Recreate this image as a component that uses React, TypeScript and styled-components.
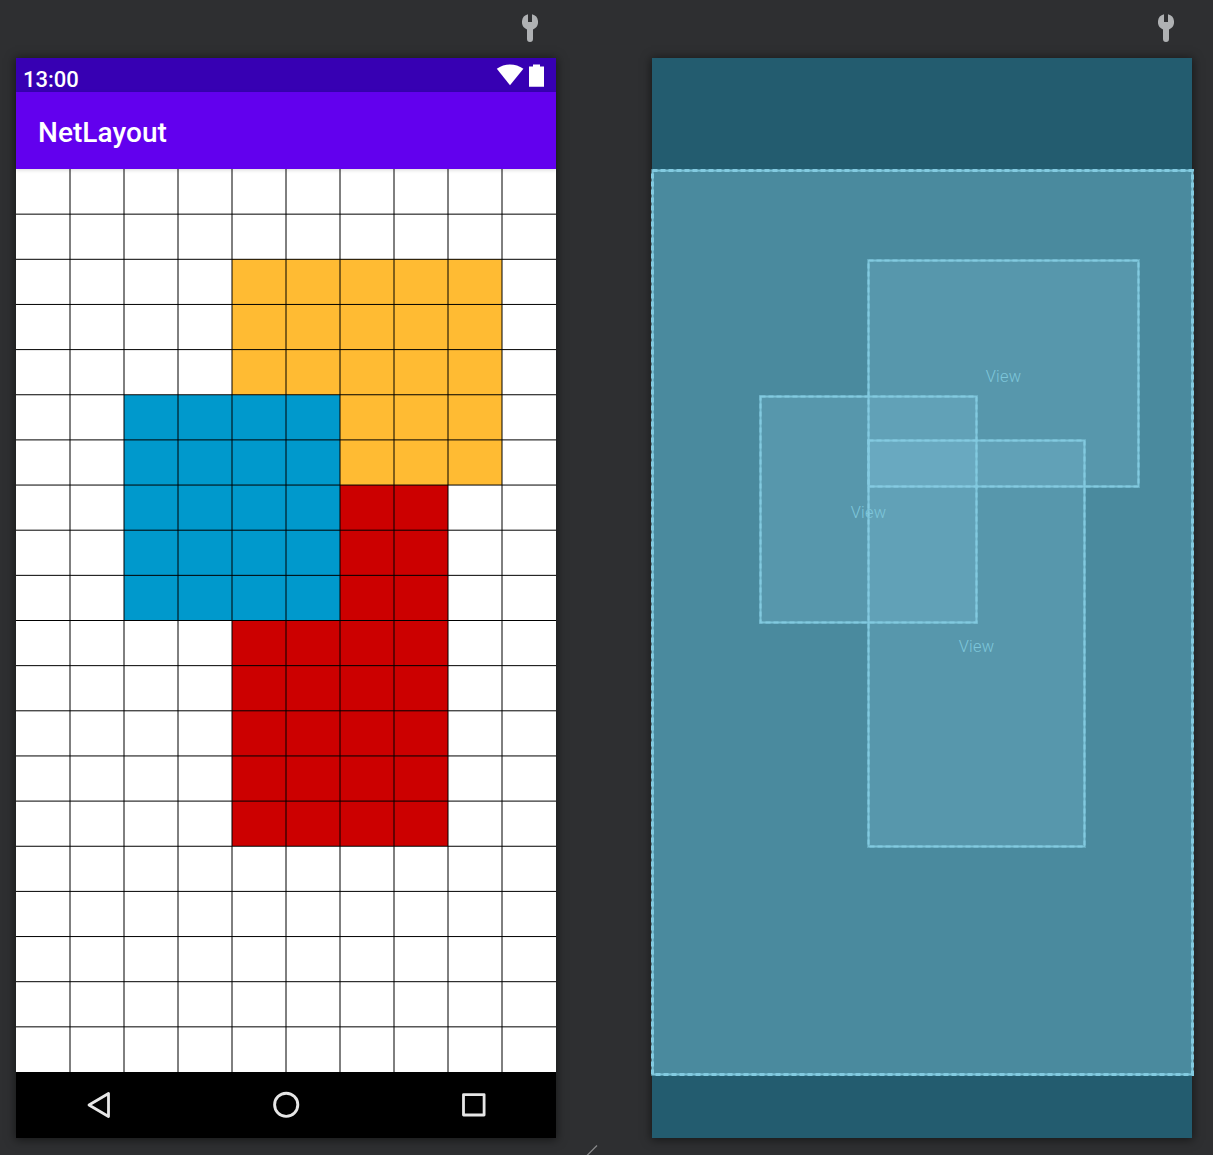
import React from 'react';
import styled, { createGlobalStyle } from 'styled-components';

const GlobalStyle = createGlobalStyle`
  * { box-sizing: border-box; }
  html, body { margin: 0; padding: 0; background: #2e2f31; }
  body { width: 1213px; height: 1155px; overflow: hidden; }
`;

const Surface = styled.main`
  position: relative;
  display: flex;
  gap: 96px;
  width: 1213px;
  height: 1155px;
  padding: 0 16px;
  background: #2e2f31;
  overflow: hidden;
  font-family: Roboto, "Liberation Sans", sans-serif;
`;

const Pane = styled.section`
  display: flex;
  flex-direction: column;
  flex: none;
  width: 540px;
`;

const PaneHeader = styled.div`
  display: flex;
  justify-content: flex-end;
  height: 58px;
  padding: 14px 18px 0 0;
`;

const Screen = styled.div<{ $color: string }>`
  display: flex;
  flex-direction: column;
  height: 1080px;
  background: ${p => p.$color};
  box-shadow: 0 1px 9px 1px rgba(0, 0, 0, 0.5);
`;

const StatusBar = styled.div`
  display: flex;
  justify-content: space-between;
  height: 34px;
  padding: 6px 12px 0 7px;
  background: #3700b3;
  color: #fff;
`;

const Clock = styled.span`
  padding-top: 3px;
  font-size: 22px;
  line-height: 26px;
  font-weight: 500;
`;

const StatusIcons = styled.div`
  display: flex;
  gap: 5px;
`;

const AppBar = styled.div`
  display: flex;
  align-items: center;
  position: relative;
  z-index: 1;
  height: 77px;
  padding: 5px 22px 0;
  background: #6200ee;
  color: #fff;
  box-shadow: 0 1px 4px rgba(0, 0, 0, 0.16);
`;

const Title = styled.h1`
  margin: 0;
  font-size: 28px;
  line-height: 32px;
  font-weight: 500;
  letter-spacing: 0.05px;
`;

const NetGrid = styled.div`
  position: relative;
  display: grid;
  grid-template-columns: repeat(10, 54px);
  grid-template-rows: repeat(20, 45.15px);
  height: 903px;
  background: #fff;
`;

const Block = styled.div<{ $color: string; $area: string }>`
  grid-area: ${p => p.$area};
  background: ${p => p.$color};
`;

const GridLines = styled.svg`
  position: absolute;
  inset: 0;
`;

const NavBar = styled.div`
  display: flex;
  justify-content: space-between;
  align-items: center;
  height: 66px;
  padding: 0 68px;
  background: #000;
`;

const BlueprintTop = styled.div`
  flex: none;
  height: 111px;
`;

const Wireframe = styled.div`
  flex: none;
  position: relative;
  display: grid;
  grid-template-columns: 108px 108px 108px 108px 54px 54px;
  grid-template-rows: 90px 136px 44px 46px 136px 224px 228px;
  width: 543px;
  height: 907px;
  margin-left: -1px;
`;

const Node = styled.div<{ $area: string }>`
  grid-area: ${p => p.$area};
  position: relative;
  display: flex;
  align-items: center;
  justify-content: center;
  margin: 0 -3px -3px 0;
  padding-top: 7px;
`;

const Fill = styled.div<{ $root?: boolean }>`
  position: absolute;
  inset: 1px;
  background: ${p => (p.$root ? '#4a8a9e' : 'rgba(139, 203, 230, 0.2)')};
`;

const Outline = styled.svg`
  position: absolute;
  inset: 0;
  width: 100%;
  height: 100%;
  fill: none;
  stroke: #82cae0;

  rect {
    width: calc(100% - 3px);
    height: calc(100% - 3px);
  }
`;

const Label = styled.span`
  position: relative;
  font-size: 16.4px;
  line-height: 20px;
  font-weight: 300;
  letter-spacing: 0.2px;
  color: #7ec6da;
`;

const ResizeMark = styled.svg`
  position: absolute;
  left: 586px;
  top: 1145px;
`;

function Wrench() {
  return (
    <svg width="16" height="28" viewBox="0 0 16 28" fill="#afb1b3">
      <path d="M6 .2V8h4V.2A8 8 0 0 1 11 15.4V25a3 3 0 0 1-6 0V15.4A8 8 0 0 1 6 .2Z" />
    </svg>
  );
}

const columns = [1, 2, 3, 4, 5, 6, 7, 8, 9];
const rows = Array.from({ length: 19 }, (_, i) => i + 1);

const blocks = [
  { color: '#cc0000', area: '7 / 5 / 16 / 9' },
  { color: '#ffbb33', area: '3 / 5 / 8 / 10' },
  { color: '#0099cc', area: '6 / 3 / 11 / 7' },
];

const nodes = ['2 / 3 / 5 / 6', '4 / 3 / 7 / 5', '3 / 2 / 6 / 4'];

function Frame({ area, root }: { area: string; root?: boolean }) {
  return (
    <Node $area={area}>
      <Fill $root={root} />
      <Outline>
        <rect x="1.5" y="1.5" strokeOpacity={root ? 0.5 : 0.45} strokeWidth="3" />
        <rect x="1.5" y="1.5" strokeOpacity="0.7" strokeWidth="1" />
        <rect x="1.5" y="1.5" strokeWidth={root ? 3 : 2} strokeDasharray="5 3" />
      </Outline>
      {!root && <Label>View</Label>}
    </Node>
  );
}

export default function App() {
  return (
    <>
      <GlobalStyle />
      <Surface>
        <Pane>
          <PaneHeader><Wrench /></PaneHeader>
          <Screen $color="#fff">
            <StatusBar>
              <Clock>13:00</Clock>
              <StatusIcons>
                <svg width="28" height="23" viewBox="0 0 28 23" fill="#fff">
                  <path d="M.8 4.8C8.500-.9 19.500-.9 27.400 4.800L14 21.200Z" />
                </svg>
                <svg width="15" height="23" viewBox="0 0 15 23" fill="#fff">
                  <path d="M4 .5h7v2h4v20.300H0V2.500h4Z" />
                </svg>
              </StatusIcons>
            </StatusBar>
            <AppBar><Title>NetLayout</Title></AppBar>
            <NetGrid>
              {blocks.map(b => <Block key={b.color} $color={b.color} $area={b.area} />)}
              <GridLines width="540" height="903" stroke="#000" strokeWidth="1">
                {columns.map(c => <line key={c} x1={c * 54} x2={c * 54} y1="0" y2="903" />)}
                {rows.map(r => <line key={r} x1="0" x2="540" y1={r * 45.15} y2={r * 45.15} />)}
              </GridLines>
            </NetGrid>
            <NavBar>
              <svg width="28" height="28" viewBox="0 0 28 28" fill="none" stroke="#e6e6e6" strokeWidth="2.8" strokeLinejoin="round">
                <path d="M5 14 24.500 2.500v23Z" />
              </svg>
              <svg width="28" height="28" viewBox="0 0 28 28" fill="none" stroke="#e6e6e6" strokeWidth="2.9">
                <circle cx="14.200" cy="13.800" r="11.600" />
              </svg>
              <svg width="28" height="28" viewBox="0 0 28 28" fill="none" stroke="#e6e6e6" strokeWidth="2.8" strokeLinejoin="round">
                <rect x="3.500" y="3.600" width="20.600" height="20.400" />
              </svg>
            </NavBar>
          </Screen>
        </Pane>
        <Pane>
          <PaneHeader><Wrench /></PaneHeader>
          <Screen $color="#235c6f">
            <BlueprintTop />
            <Wireframe>
              <Frame area="1 / 1 / 8 / 7" root />
              {nodes.map(area => <Frame key={area} area={area} />)}
            </Wireframe>
          </Screen>
        </Pane>
        <ResizeMark width="12" height="10" stroke="#8a8b8c" strokeWidth="1.2">
          <path d="M1 10.500 11 .5" />
        </ResizeMark>
      </Surface>
    </>
  );
}
